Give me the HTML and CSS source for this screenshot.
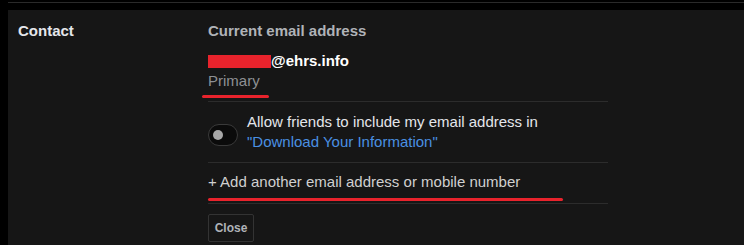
FILE: index.html
```html
<!DOCTYPE html>
<html>
<head>
<meta charset="utf-8">
<link rel="stylesheet" href="styles.css">
</head>
<body>
<div class="topline"></div>
<div class="panel">
  <div class="label">Contact</div>
  <div class="content">
    <div class="heading">Current email address</div>
    <div class="email-block">
      <div class="email"><span class="redact"></span>@ehrs.info</div>
      <div class="primary">Primary</div>
      <div class="scribble scribble-primary"></div>
    </div>
    <div class="toggle-row">
      <span class="toggle"><span class="knob"></span></span>
      <div class="toggle-text">Allow friends to include my email address in<br><a class="link">"Download Your Information"</a></div>
    </div>
    <div class="add-row">
      <span class="add">+ Add another email address or mobile number</span>
      <div class="scribble scribble-add"></div>
    </div>
    <button class="close">Close</button>
  </div>
</div>
</body>
</html>
```
FILE: styles.css
```css
html, body {
  margin: 0;
  padding: 0;
  background: #000;
  height: 245px;
  overflow: hidden;
  font-family: "Liberation Sans", Arial, sans-serif;
  font-size: 15px;
  line-height: 20px;
}
.topline {
  margin: 2px 0 0 8px;
  height: 1px;
  background: #2a2a2a;
}
.panel {
  margin: 7px 0 0 8px;
  background: #161616;
  height: 235px;
  display: flex;
  padding: 11px 0 0 10px;
  box-sizing: border-box;
}
.label {
  width: 190px;
  font-weight: bold;
  color: #e4e6eb;
}
.content {
  width: 400px;
  display: flex;
  flex-direction: column;
  align-items: flex-start;
}
.heading {
  font-weight: bold;
  color: #b0b3b8;
}
.email-block {
  position: relative;
  align-self: stretch;
  padding: 10px 0 10px;
  border-bottom: 1px solid #2c2c2c;
}
.email {
  display: flex;
  align-items: center;
  font-weight: bold;
  color: #fff;
}
.redact {
  display: inline-block;
  width: 63px;
  height: 13px;
  margin-top: 1px;
  background: #e8232c;
}
.primary {
  color: #8e9094;
}
.scribble {
  position: absolute;
  height: 3px;
  background: #e8232c;
  border-radius: 2px;
}
.scribble-primary {
  left: -6px;
  width: 67px;
  bottom: 3px;
}
.toggle-row {
  align-self: stretch;
  display: flex;
  align-items: flex-start;
  gap: 9px;
  padding: 10px 0 10px;
  border-bottom: 1px solid #2c2c2c;
}
.toggle {
  margin-top: 12px;
  width: 30px;
  height: 22px;
  box-sizing: border-box;
  border: 1px solid #3a3a3a;
  border-radius: 11px;
  background: #0b0b0b;
  display: flex;
  align-items: center;
  padding-left: 4px;
}
.knob {
  width: 10px;
  height: 10px;
  border-radius: 50%;
  background: #a8a8a8;
}
.toggle-text {
  color: #e4e6eb;
}
.link {
  color: #4a90e2;
}
.add-row {
  position: relative;
  align-self: stretch;
  padding: 9px 0 11px;
  border-bottom: 1px solid #2c2c2c;
  color: #d0d0d0;
}
.scribble-add {
  left: 0;
  width: 355px;
  bottom: 2px;
}
.close {
  margin-top: 10px;
  width: 46px;
  height: 28px;
  background: transparent;
  border: 1px solid #333;
  border-radius: 2px;
  color: #b0b3b8;
  font-family: "Liberation Sans", Arial, sans-serif;
  font-size: 12px;
  font-weight: bold;
  padding: 0;
}
```
